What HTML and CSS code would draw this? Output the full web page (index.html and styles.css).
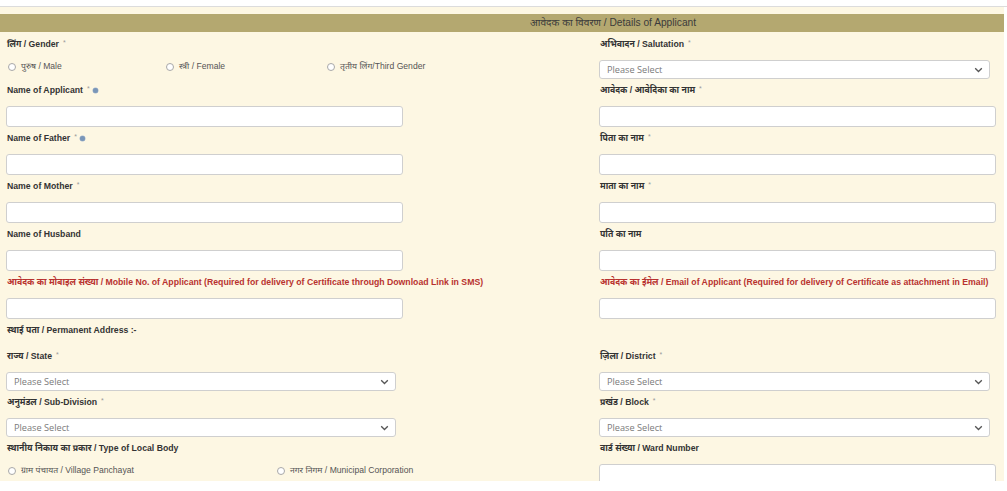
FILE: index.html
```html
<!DOCTYPE html>
<html lang="hi">
<head>
<meta charset="utf-8">
<title>आवेदक का विवरण</title>
<link rel="stylesheet" href="styles.css">
</head>
<body>
<div class="topbar"></div>
<div class="panel">
  <div class="panel-head"><span class="panel-title">आवेदक का विवरण / Details of Applicant</span></div>
  <div class="form-grid">
    <div class="field">
      <div class="label">लिंग / Gender <span class="req">*</span></div>
      <div class="radios">
        <span class="radio w158"><span class="dot"></span>पुरुष / Male</span>
        <span class="radio w161"><span class="dot"></span>स्त्री / Female</span>
        <span class="radio"><span class="dot"></span>तृतीय लिंग/Third Gender</span>
      </div>
    </div>
    <div class="field">
      <div class="label">अभिवादन / Salutation <span class="req">*</span></div>
      <div class="select"><span>Please Select</span><svg class="chev" width="9" height="6" viewBox="0 0 9 6"><path d="M1.2 1.2l3.3 3.3 3.3-3.3" fill="none" stroke="#555" stroke-width="1.3"/></svg></div>
    </div>

    <div class="field">
      <div class="label">Name of Applicant <span class="req">*</span> <span class="info"></span></div>
      <div class="input"></div>
    </div>
    <div class="field">
      <div class="label">आवेदक / आवेदिका का नाम <span class="req">*</span></div>
      <div class="input"></div>
    </div>

    <div class="field">
      <div class="label">Name of Father <span class="req">*</span> <span class="info"></span></div>
      <div class="input"></div>
    </div>
    <div class="field">
      <div class="label">पिता का नाम <span class="req">*</span></div>
      <div class="input"></div>
    </div>

    <div class="field">
      <div class="label">Name of Mother <span class="req">*</span></div>
      <div class="input"></div>
    </div>
    <div class="field">
      <div class="label">माता का नाम <span class="req">*</span></div>
      <div class="input"></div>
    </div>

    <div class="field">
      <div class="label">Name of Husband</div>
      <div class="input"></div>
    </div>
    <div class="field">
      <div class="label">पति का नाम</div>
      <div class="input"></div>
    </div>

    <div class="field">
      <div class="label red">आवेदक का मोबाइल संख्या / Mobile No. of Applicant (Required for delivery of Certificate through Download Link in SMS)</div>
      <div class="input"></div>
    </div>
    <div class="field">
      <div class="label red">आवेदक का ईमेल / Email of Applicant (Required for delivery of Certificate as attachment in Email)</div>
      <div class="input"></div>
    </div>

    <div class="field full section">
      <div class="label">स्थाई पता / Permanent Address :-</div>
    </div>

    <div class="field">
      <div class="label">राज्य / State <span class="req">*</span></div>
      <div class="select narrow"><span>Please Select</span><svg class="chev" width="9" height="6" viewBox="0 0 9 6"><path d="M1.2 1.2l3.3 3.3 3.3-3.3" fill="none" stroke="#555" stroke-width="1.3"/></svg></div>
    </div>
    <div class="field">
      <div class="label">ज़िला / District <span class="req">*</span></div>
      <div class="select"><span>Please Select</span><svg class="chev" width="9" height="6" viewBox="0 0 9 6"><path d="M1.2 1.2l3.3 3.3 3.3-3.3" fill="none" stroke="#555" stroke-width="1.3"/></svg></div>
    </div>

    <div class="field">
      <div class="label">अनुमंडल / Sub-Division <span class="req">*</span></div>
      <div class="select narrow"><span>Please Select</span><svg class="chev" width="9" height="6" viewBox="0 0 9 6"><path d="M1.2 1.2l3.3 3.3 3.3-3.3" fill="none" stroke="#555" stroke-width="1.3"/></svg></div>
    </div>
    <div class="field">
      <div class="label">प्रखंड / Block <span class="req">*</span></div>
      <div class="select"><span>Please Select</span><svg class="chev" width="9" height="6" viewBox="0 0 9 6"><path d="M1.2 1.2l3.3 3.3 3.3-3.3" fill="none" stroke="#555" stroke-width="1.3"/></svg></div>
    </div>

    <div class="field">
      <div class="label">स्थानीय निकाय का प्रकार / Type of Local Body</div>
      <div class="radios">
        <span class="radio w269"><span class="dot"></span>ग्राम पंचायत / Village Panchayat</span>
        <span class="radio"><span class="dot"></span>नगर निगम / Municipal Corporation</span>
      </div>
    </div>
    <div class="field">
      <div class="label">वार्ड संख्या / Ward Number</div>
      <div class="input"></div>
    </div>
  </div>
</div>
</body>
</html>
```

FILE: styles.css
```css
html, body {
  margin: 0;
  padding: 0;
  background: #ffffff;
}
body {
  font-family: "Liberation Sans", "Noto Sans Devanagari", "Lohit Devanagari", "FreeSans", Arial, sans-serif;
  color: #333;
  width: 1007px;
  height: 491px;
  overflow: hidden;
}
.topbar {
  height: 6px;
  background: #ffffff;
  border-bottom: 1px solid #dcdcdc;
}
.panel {
  width: 1004px;
  height: 474px;
  overflow: hidden;
  background: #fdf7e3;
  padding-top: 7px;
  box-sizing: border-box;
}
.panel-head {
  height: 18px;
  background: #b4a870;
  display: flex;
  align-items: center;
  padding-left: 530px;
}
.panel-title {
  font-size: 10.2px;
  color: #3b3b3b;
}
.form-grid {
  display: grid;
  grid-template-columns: 397px 397px;
  column-gap: 196px;
  padding-left: 6px;
  padding-top: 4px;
}
.field {
  display: flex;
  flex-direction: column;
}
.full {
  grid-column: 1 / span 2;
}
.label {
  font-size: 8.7px;
  font-weight: bold;
  line-height: 14px;
  height: 14px;
  margin-top: 1px;
  margin-bottom: 9px;
  padding-left: 1px;
  white-space: nowrap;
  display: flex;
  align-items: center;
  gap: 3px;
  color: #333;
}
.section .label {
  margin-bottom: 11px;
}
.label.red {
  color: #b8322f;
}
.req {
  color: #9a9a9a;
  font-weight: normal;
  font-size: 7px;
  margin-left: 1px;
  align-self: flex-start;
  line-height: 11px;
}
.info {
  width: 5px;
  height: 5px;
  border-radius: 50%;
  background: #7a96b8;
  box-shadow: 0 0 0 0.5px #a9bbd0;
}
.input {
  height: 21px;
  box-sizing: border-box;
  border: 1px solid #cfcfcf;
  border-radius: 3px;
  background: #fff;
  margin-bottom: 3px;
}
.select {
  height: 19px;
  box-sizing: border-box;
  border: 1px solid #cfcfcf;
  border-radius: 3px;
  background: #fff;
  margin-bottom: 3px;
  display: flex;
  align-items: center;
  justify-content: space-between;
  padding: 0 6px 0 7px;
  font-family: "Open Sans", "Liberation Sans", sans-serif;
  font-size: 9.2px;
  color: #7a7a7a;
  width: 391px;
}
.select.narrow {
  width: 390px;
}
.radios {
  display: flex;
  align-items: center;
  height: 14px;
  font-size: 8.6px;
  color: #555;
  overflow: visible;
}
.radio {
  display: flex;
  align-items: center;
  padding-left: 2px;
  white-space: nowrap;
  flex: none;
  box-sizing: border-box;
}
.w158 { width: 158px; }
.w161 { width: 161px; }
.w269 { width: 269px; }
.dot {
  width: 6px;
  height: 6px;
  border: 1px solid #a8a8a8;
  border-radius: 50%;
  background: #fff;
  margin-right: 5px;
}
```
